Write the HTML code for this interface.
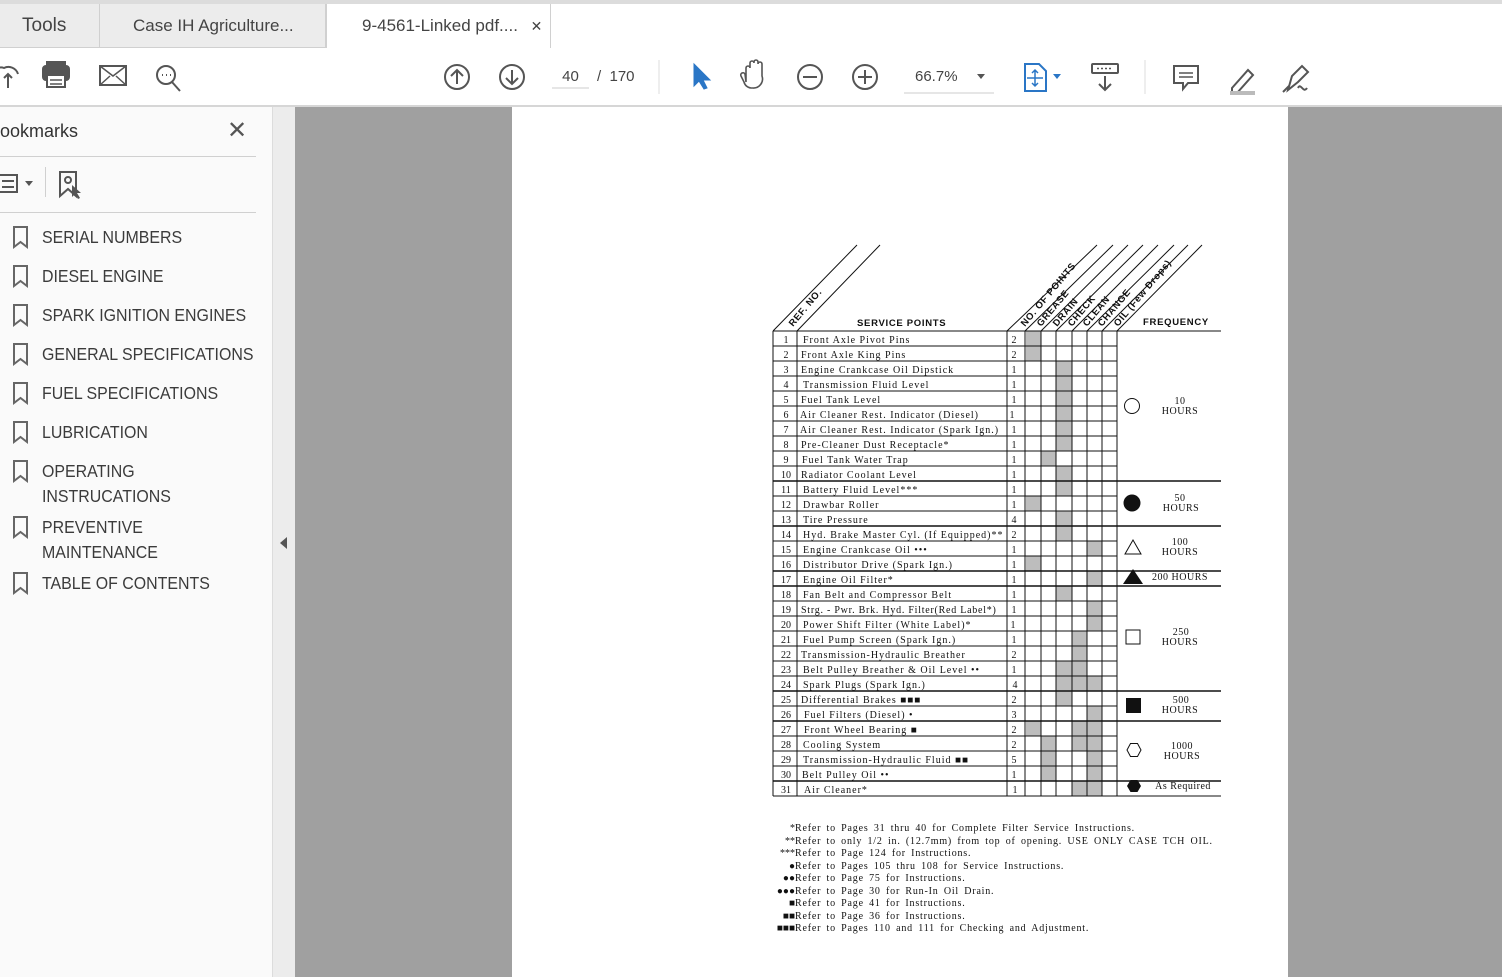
<!DOCTYPE html>
<html><head><meta charset="utf-8"><style>
*{margin:0;padding:0;box-sizing:border-box}
body{width:1502px;height:977px;overflow:hidden;background:#fff;font-family:"Liberation Sans",sans-serif;position:relative}
.abs{position:absolute}
.tabbar{left:0;top:0;width:1502px;height:48px;background:#fff;border-top:4px solid #dcdcdc}
.tab{position:absolute;top:4px;height:44px;background:#ececec;border-right:1px solid #d0d0d0;border-bottom:1px solid #d0d0d0;font-size:17px;color:#444;line-height:44px}
.toolbar{left:0;top:48px;width:1502px;height:59px;background:#fff;border-bottom:2px solid #d6d6d6}
.side{left:0;top:107px;width:272px;height:870px;background:#fafafa}
.bm{position:absolute;left:42px;font-size:17.5px;color:#3b3b3b;line-height:25px;transform:scaleX(0.91);transform-origin:left top;white-space:nowrap}
</style></head><body>
<div class="abs tabbar"></div>
<div class="tab" style="left:0;width:100px;padding-left:22px;font-size:19px">Tools</div>
<div class="tab" style="left:100px;width:226px;padding-left:33px">Case IH Agriculture...</div>
<div class="tab" style="left:326px;width:225px;background:#fff;border-left:1px solid #d0d0d0;border-bottom:none;padding-left:35px">9-4561-Linked pdf.... <span style="font-size:14px;margin-left:8px">✕</span></div>
<div class="abs toolbar"></div>
<svg class="abs" style="left:0;top:48px" width="1502" height="58" fill="none" stroke="#555" stroke-width="2">
 <path d="M-2 36 a8 8 0 0 1 6-16 a10 10 0 0 1 14 6" /><path d="M8 40 V26 M4 30 l4-4 4 4"/>
 <rect x="43" y="18" width="26" height="14" rx="3" fill="#555"/><rect x="47" y="14" width="18" height="6" fill="#555"/><rect x="47" y="27" width="18" height="12" fill="#fff"/><path d="M50 32h12M50 36h12" stroke-width="1.5"/>
 <rect x="100" y="18" width="26" height="19"/><path d="M100 18l13 10 13-10M100 37l10-9M126 37l-10-9" stroke-width="1.5"/>
 <circle cx="166" cy="27" r="9"/><path d="M172 34l8 9"/><path d="M162 27h1M166 27h1M170 27h1"/>
 <circle cx="457" cy="29" r="12"/><path d="M457 36V22M451 28l6-6 6 6"/>
 <circle cx="512" cy="29" r="12"/><path d="M512 22v14M506 30l6 6 6-6"/>
 <path d="M552 40h37" stroke="#ccc" stroke-width="1"/>
 <path d="M659 12v34M1145 12v34" stroke="#ddd" stroke-width="1"/>
 <path d="M694 16l0 22 5-5 5 8 3-1-4-8 7 0z" fill="#2a76c6" stroke="#2a76c6" stroke-width="1"/>
 <path d="M746 34v-14a2 2 0 0 1 4 0v-5a2 2 0 0 1 4 0v-1a2 2 0 0 1 4 0v2a2 2 0 0 1 4 0v12a9 9 0 0 1-9 12h-2a8 8 0 0 1-7-6l-3-6a2 2 0 0 1 4-2z" stroke-width="1.6"/>
 <circle cx="810" cy="29" r="12"/><path d="M803 29h14"/>
 <circle cx="865" cy="29" r="12"/><path d="M858 29h14M865 22v14"/>
 <path d="M904 45h90" stroke="#ccc" stroke-width="1"/><path d="M977 26h8l-4 5z" fill="#555" stroke="none"/>
 <path d="M1025 16h14l7 7v20h-21z" stroke="#2a76c6"/><path d="M1035 22v16M1027 30h16M1032 25l3-3 3 3M1032 35l3 3 3-3" stroke="#2a76c6" stroke-width="1.5"/><path d="M1053 26h8l-4 5z" fill="#2a76c6" stroke="none"/>
 <rect x="1092" y="16" width="26" height="9" rx="1"/><path d="M1097 20.5h16" stroke-dasharray="2 2" stroke-width="1.5"/><path d="M1105 28v14M1099 36l6 6 6-6"/>
 <path d="M1174 18h24v17h-10l-5 6v-6h-9z"/><path d="M1179 25h14M1179 29h14" stroke-width="1.5"/>
 <path d="M1232 40l16-18 5 5-16 18h-5z"/><path d="M1230 45h25" stroke="#bbb" stroke-width="4"/>
 <path d="M1288 42l4-14 10-10 6 6-10 10z M1283 44l6-6"/><path d="M1298 40c3-6 5 6 9 0"/>
</svg>
<div class="abs" style="left:552px;top:68px;font-size:15px;color:#444;width:37px;text-align:center">40</div>
<div class="abs" style="left:597px;top:68px;font-size:15px;color:#444">/ &nbsp;170</div>
<div class="abs" style="left:915px;top:68px;font-size:15px;color:#444">66.7%</div>

<div class="abs side"></div>
<div class="abs" style="left:0;top:121px;font-size:18px;color:#333">ookmarks</div>
<div class="abs" style="left:227px;top:116px;font-size:24px;color:#555">✕</div>
<div class="abs" style="left:0;top:156px;width:256px;height:1px;background:#d0d0d0"></div>
<div class="abs" style="left:0;top:212px;width:256px;height:1px;background:#d0d0d0"></div>
<div class="abs" style="left:45px;top:167px;width:1px;height:30px;background:#d0d0d0"></div>
<svg class="abs" style="left:0;top:168px" width="90" height="32" fill="none" stroke="#555" stroke-width="2">
 <rect x="-4" y="7" width="21" height="17"/><path d="M2 13h12M2 19h12M-2 13h2M-2 19h2"/><path d="M25 13h8l-4 5z" fill="#555" stroke="none"/>
 <path d="M60 4h16v24l-8-7-8 7z"/><circle cx="68" cy="12" r="3"/><path d="M72 17l0 12 3-3 3 5 2-1-3-5h4z" fill="#555" stroke="none"/>
</svg>
<svg class="abs" style="left:0;top:0" width="40" height="977" fill="none" stroke="#666" stroke-width="2">
 <path d="M14 227h13v20l-6.5-5-6.5 5z"/><path d="M14 266h13v20l-6.5-5-6.5 5z"/><path d="M14 305h13v20l-6.5-5-6.5 5z"/><path d="M14 344h13v20l-6.5-5-6.5 5z"/><path d="M14 383h13v20l-6.5-5-6.5 5z"/><path d="M14 422h13v20l-6.5-5-6.5 5z"/><path d="M14 461h13v20l-6.5-5-6.5 5z"/><path d="M14 517h13v20l-6.5-5-6.5 5z"/><path d="M14 573h13v20l-6.5-5-6.5 5z"/>
</svg>
<div class="bm" style="top:225px">SERIAL NUMBERS</div>
<div class="bm" style="top:264px">DIESEL ENGINE</div>
<div class="bm" style="top:303px">SPARK IGNITION ENGINES</div>
<div class="bm" style="top:342px">GENERAL SPECIFICATIONS</div>
<div class="bm" style="top:381px">FUEL SPECIFICATIONS</div>
<div class="bm" style="top:420px">LUBRICATION</div>
<div class="bm" style="top:459px">OPERATING<br>INSTRUCATIONS</div>
<div class="bm" style="top:515px">PREVENTIVE<br>MAINTENANCE</div>
<div class="bm" style="top:571px">TABLE OF CONTENTS</div>

<div class="abs" style="left:272px;top:107px;width:23px;height:870px;background:#ececec;border-left:1px solid #dcdcdc"></div>
<div class="abs" style="left:280px;top:537px;width:0;height:0;border-top:6px solid transparent;border-bottom:6px solid transparent;border-right:7px solid #555"></div>
<div class="abs" style="left:295px;top:107px;width:1207px;height:870px;background:#a0a0a0"></div>
<div class="abs" style="left:512px;top:107px;width:776px;height:870px;background:#fff"></div>

<svg class="abs" style="left:0;top:0" width="1502" height="977" font-family="'Liberation Serif',serif" font-size="10" fill="#111">
<g fill="#bdbdbd">
<rect x="1026" y="331" width="15" height="30"/>
<rect x="1056" y="361" width="16" height="90"/><rect x="1041" y="451" width="15" height="15"/><rect x="1056" y="466" width="16" height="30"/>
<rect x="1026" y="496" width="15" height="15"/><rect x="1056" y="511" width="16" height="30"/><rect x="1087" y="541" width="15" height="15"/>
<rect x="1026" y="556" width="15" height="15"/><rect x="1087" y="571" width="15" height="15"/><rect x="1056" y="586" width="16" height="15"/>
<rect x="1087" y="601" width="15" height="30"/><rect x="1072" y="631" width="15" height="60"/><rect x="1056" y="661" width="16" height="45"/>
<rect x="1087" y="676" width="15" height="15"/><rect x="1087" y="706" width="15" height="90"/><rect x="1026" y="721" width="15" height="15"/>
<rect x="1072" y="721" width="15" height="30"/><rect x="1041" y="736" width="15" height="45"/><rect x="1072" y="781" width="15" height="15"/>
</g>
<g stroke="#111" stroke-width="1" fill="none">
<path d="M773 331h448M773 796h448M773 331v465M797 331v465M1007 331v465M1025 331v465M1041 331v465M1056 331v465M1072 331v465M1087 331v465M1102 331v465M1117 331v465"/>
<path d="M773 346h344M773 361h344M773 376h344M773 391h344M773 406h344M773 421h344M773 436h344M773 451h344M773 466h344M773 496h344M773 511h344M773 541h344M773 556h344M773 601h344M773 616h344M773 631h344M773 646h344M773 661h344M773 676h344M773 706h344M773 736h344M773 751h344M773 766h344"/>
<path d="M773 481h448M773 526h448M773 571h448M773 586h448M773 691h448M773 721h448M773 781h448" stroke-width="1.5"/>
<path d="M773 331L857 245M797 331L880 245M1007 331L1097 245M1025 331L1113 245M1041 331L1128 245M1056 331L1143 245M1072 331L1158 245M1087 331L1174 245M1102 331L1188 245M1117 331L1202 245"/>
<circle cx="1132" cy="406" r="7.5"/><path d="M1125 554l8-14 8 14z"/><rect x="1126" y="630" width="14" height="14"/><path d="M1127 750l3.5-6.5h7l3.5 6.5-3.5 6.5h-7z"/>
</g>
<circle cx="1132" cy="503" r="8.5"/><path d="M1123 584l10-15 10 15z"/><rect x="1126" y="698" width="15" height="15"/><path d="M1127 786l3.5-6h7l3.5 6-3.5 6h-7z"/>
<g font-family="'Liberation Sans',sans-serif" font-weight="bold" font-size="9.5" letter-spacing="0.7">
<text x="857" y="326">SERVICE POINTS</text><text x="1143" y="325">FREQUENCY</text>
<text transform="translate(793,327) rotate(-50)">REF. NO.</text>
<text transform="translate(1025,327) rotate(-50)">NO. OF POINTS</text>
<text transform="translate(1041,327) rotate(-50)">GREASE</text>
<text transform="translate(1057,327) rotate(-50)">DRAIN</text>
<text transform="translate(1072,327) rotate(-50)">CHECK</text>
<text transform="translate(1087,327) rotate(-50)">CLEAN</text>
<text transform="translate(1102,327) rotate(-50)">CHANGE</text>
<text transform="translate(1118,327) rotate(-50)">OIL (Few Drops)</text>
</g>
<g text-anchor="middle" letter-spacing="0.5">
<text x="1180" y="404">10</text><text x="1180" y="414">HOURS</text>
<text x="1180" y="501">50</text><text x="1181" y="511">HOURS</text>
<text x="1180" y="545">100</text><text x="1180" y="555">HOURS</text>
<text x="1180" y="580">200 HOURS</text>
<text x="1181" y="635">250</text><text x="1180" y="645">HOURS</text>
<text x="1181" y="703">500</text><text x="1180" y="713">HOURS</text>
<text x="1182" y="749">1000</text><text x="1182" y="759">HOURS</text>
<text x="1183" y="789">As Required</text>
</g>
<g text-anchor="middle">
<text x="786" y="343">1</text><text x="786" y="358">2</text><text x="786" y="373">3</text><text x="786" y="388">4</text><text x="786" y="403">5</text><text x="786" y="418">6</text><text x="786" y="433">7</text><text x="786" y="448">8</text><text x="786" y="463">9</text><text x="786" y="478">10</text><text x="786" y="493">11</text><text x="786" y="508">12</text><text x="786" y="523">13</text><text x="786" y="538">14</text><text x="786" y="553">15</text><text x="786" y="568">16</text><text x="786" y="583">17</text><text x="786" y="598">18</text><text x="786" y="613">19</text><text x="786" y="628">20</text><text x="786" y="643">21</text><text x="786" y="658">22</text><text x="786" y="673">23</text><text x="786" y="688">24</text><text x="786" y="703">25</text><text x="786" y="718">26</text><text x="786" y="733">27</text><text x="786" y="748">28</text><text x="786" y="763">29</text><text x="786" y="778">30</text><text x="786" y="793">31</text>
</g>
<g letter-spacing="1">
<text x="803" y="343">Front Axle Pivot Pins</text><text x="801" y="358">Front Axle King Pins</text><text x="801" y="373">Engine Crankcase Oil Dipstick</text><text x="803" y="388">Transmission Fluid Level</text><text x="801" y="403">Fuel Tank Level</text><text x="800" y="418">Air Cleaner Rest. Indicator (Diesel)</text><text x="800" y="433">Air Cleaner Rest. Indicator (Spark Ign.)</text><text x="801" y="448">Pre-Cleaner Dust Receptacle*</text><text x="802" y="463">Fuel Tank Water Trap</text><text x="801" y="478">Radiator Coolant Level</text><text x="803" y="493">Battery Fluid Level***</text><text x="803" y="508">Drawbar Roller</text><text x="803" y="523">Tire Pressure</text><text x="803" y="538">Hyd. Brake Master Cyl. (If Equipped)**</text><text x="803" y="553">Engine Crankcase Oil •••</text><text x="803" y="568">Distributor Drive (Spark Ign.)</text><text x="803" y="583">Engine Oil Filter*</text><text x="803" y="598">Fan Belt and Compressor Belt</text><text x="801" y="613" letter-spacing="0.75">Strg. - Pwr. Brk. Hyd. Filter(Red Label*)</text><text x="803" y="628">Power Shift Filter (White Label)*</text><text x="803" y="643">Fuel Pump Screen (Spark Ign.)</text><text x="801" y="658">Transmission-Hydraulic Breather</text><text x="803" y="673">Belt Pulley Breather &amp; Oil Level ••</text><text x="803" y="688">Spark Plugs (Spark Ign.)</text><text x="801" y="703">Differential Brakes ■■■</text><text x="804" y="718">Fuel Filters (Diesel) •</text><text x="804" y="733">Front Wheel Bearing ■</text><text x="803" y="748">Cooling System</text><text x="803" y="763">Transmission-Hydraulic Fluid ■■</text><text x="802" y="778">Belt Pulley Oil ••</text><text x="804" y="793">Air Cleaner*</text>
</g>
<g text-anchor="middle">
<text x="1014" y="343">2</text><text x="1014" y="358">2</text><text x="1014" y="373">1</text><text x="1014" y="388">1</text><text x="1014" y="403">1</text><text x="1012" y="418">1</text><text x="1014" y="433">1</text><text x="1014" y="448">1</text><text x="1014" y="463">1</text><text x="1014" y="478">1</text><text x="1014" y="493">1</text><text x="1014" y="508">1</text><text x="1014" y="523">4</text><text x="1014" y="538">2</text><text x="1014" y="553">1</text><text x="1014" y="568">1</text><text x="1014" y="583">1</text><text x="1014" y="598">1</text><text x="1014" y="613">1</text><text x="1013" y="628">1</text><text x="1014" y="643">1</text><text x="1014" y="658">2</text><text x="1014" y="673">1</text><text x="1015" y="688">4</text><text x="1014" y="703">2</text><text x="1014" y="718">3</text><text x="1014" y="733">2</text><text x="1014" y="748">2</text><text x="1014" y="763">5</text><text x="1014" y="778">1</text><text x="1015" y="793">1</text>
</g>
<g text-anchor="end"><text x="795" y="831">*</text><text x="795" y="844">**</text><text x="795" y="856">***</text><text x="795" y="869">●</text><text x="795" y="881">●●</text><text x="795" y="894">●●●</text><text x="795" y="906">■</text><text x="795" y="919">■■</text><text x="795" y="931">■■■</text></g>
<g word-spacing="2" letter-spacing="0.8">
<text x="795" y="831">Refer to Pages 31 thru 40 for Complete Filter Service Instructions.</text>
<text x="795" y="844">Refer to only 1/2 in. (12.7mm) from top of opening. USE ONLY CASE TCH OIL.</text>
<text x="795" y="856">Refer to Page 124 for Instructions.</text>
<text x="795" y="869">Refer to Pages 105 thru 108 for Service Instructions.</text>
<text x="795" y="881">Refer to Page 75 for Instructions.</text>
<text x="795" y="894">Refer to Page 30 for Run-In Oil Drain.</text>
<text x="795" y="906">Refer to Page 41 for Instructions.</text>
<text x="795" y="919">Refer to Page 36 for Instructions.</text>
<text x="795" y="931">Refer to Pages 110 and 111 for Checking and Adjustment.</text>
</g>
</svg>
</body></html>
